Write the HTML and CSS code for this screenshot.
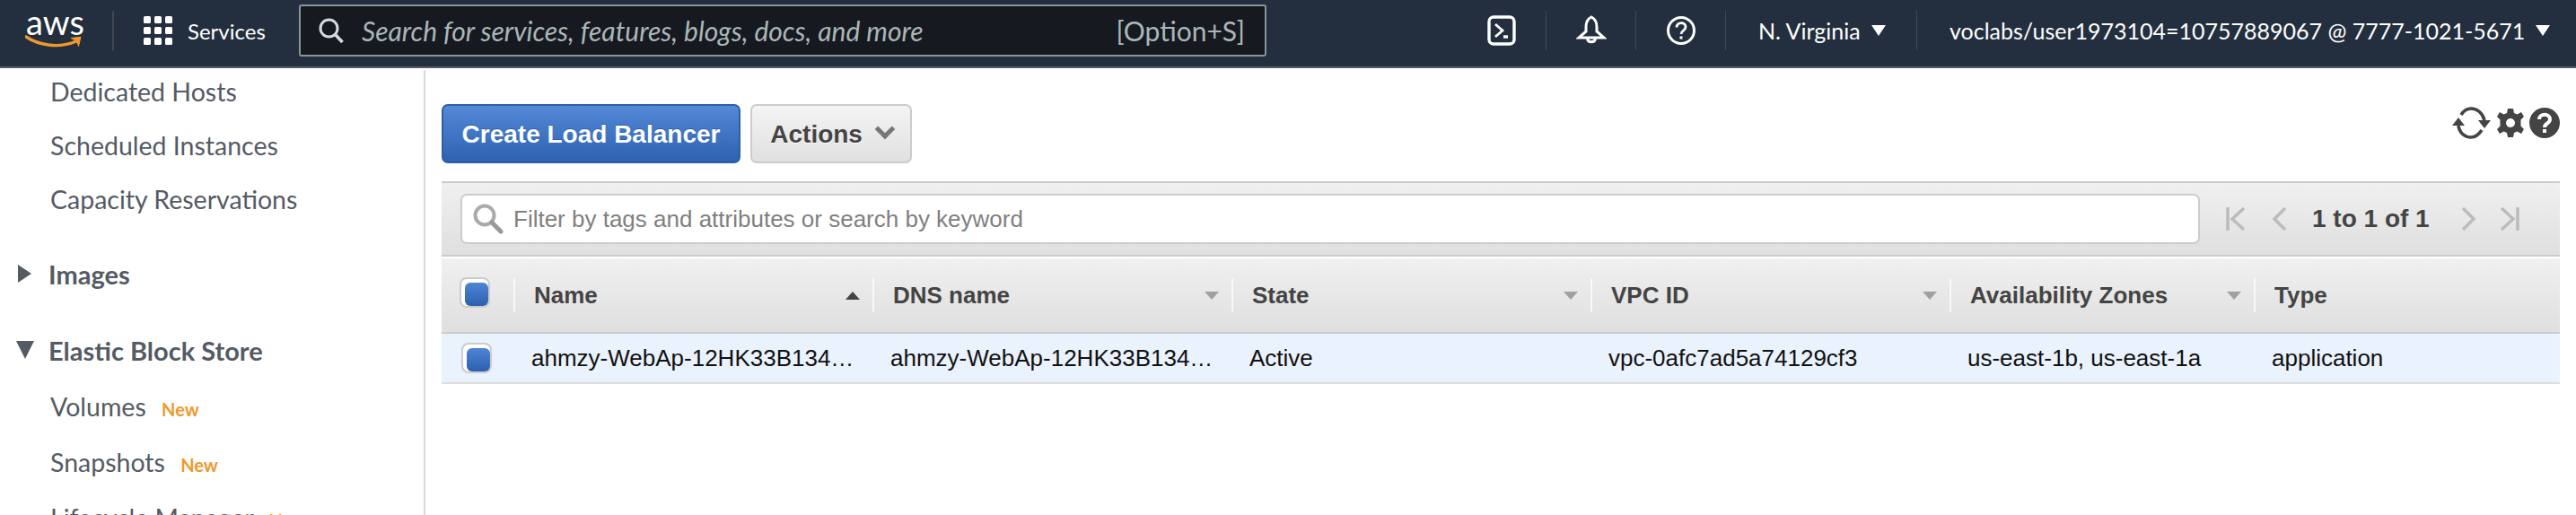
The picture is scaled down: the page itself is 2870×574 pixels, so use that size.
FILE: index.html
```html
<!DOCTYPE html>
<html lang="en">
<head>
    <meta charset="utf-8">
    <title>Load Balancers</title>
    <link rel="stylesheet" href="styles.css">
</head>
<body>
    <header class="nav">
        <div class="logo">
            <span class="logo-text">aws</span>
            <svg class="logo-smile" width="64" height="16" viewBox="0 0 64 16">
                <path d="M1 2C16 12 38 15 57 7" fill="none" stroke="#f0982a" stroke-width="3.4" stroke-linecap="round"/>
                <path d="M51 3.5L62 2.2 59.5 12.5C59 9 56 5.5 51 3.5Z" fill="#f0982a" stroke="#f0982a" stroke-width="1"/>
            </svg>
        </div>
        <span class="nav-sep logo-sep"></span>
        <svg class="grid-icon" width="32" height="32" viewBox="0 0 32 32" fill="#fff">
            <rect x="0" y="0" width="8" height="8" rx="1.5"/><rect x="12" y="0" width="8" height="8" rx="1.5"/><rect x="24" y="0" width="8" height="8" rx="1.5"/>
            <rect x="0" y="12" width="8" height="8" rx="1.5"/><rect x="12" y="12" width="8" height="8" rx="1.5"/><rect x="24" y="12" width="8" height="8" rx="1.5"/>
            <rect x="0" y="24" width="8" height="8" rx="1.5"/><rect x="12" y="24" width="8" height="8" rx="1.5"/><rect x="24" y="24" width="8" height="8" rx="1.5"/>
        </svg>
        <span class="services">Services</span>
        <div class="nav-search">
            <svg width="28" height="28" viewBox="0 0 28 28" fill="none" stroke="#d5dbdb">
                <circle cx="11.5" cy="11.5" r="9.5" stroke-width="3"/>
                <path d="M18.5 18.5L26.5 27" stroke-width="3.6"/>
            </svg>
            <span class="nav-search-text">Search for services, features, blogs, docs, and more</span>
            <span class="nav-search-key">[Option+S]</span>
        </div>
        <div class="nav-right">
            <div class="nav-cell">
                <svg width="32" height="34" viewBox="0 0 32 34" fill="none" stroke="#fff" stroke-width="3.4">
                    <rect x="2" y="2" width="28" height="30" rx="5"/>
                    <path d="M9 10L17 17 9 24" stroke-width="2.8"/>
                    <path d="M18 24H23" stroke-width="3.4"/>
                </svg>
            </div>
            <div class="nav-cell">
                <svg width="34" height="34" viewBox="0 0 34 34" fill="none" stroke="#fff" stroke-width="3">
                    <path d="M17 2C13 4 11 8 11 13V18L3 25H31L23 18V13C23 8 21 4 17 2Z"/>
                    <path d="M12.5 26C13 31 21 31 21.5 26"/>
                </svg>
            </div>
            <div class="nav-cell">
                <svg width="32" height="34" viewBox="0 0 32 34" fill="none" stroke="#fff" stroke-width="3">
                    <circle cx="16" cy="17" r="14.5"/>
                    <path d="M11 13.5C11 7 21 7 21 13C21 17 16 17 16 21" stroke-width="2.8"/>
                    <rect x="14.5" y="23.5" width="3" height="3" fill="#fff" stroke="none"/>
                </svg>
            </div>
            <div class="nav-menu region">N. Virginia <i class="nav-caret"></i></div>
            <div class="nav-menu account">voclabs/user1973104=10757889067 @ 7777-1021-5671 <i class="nav-caret"></i></div>
        </div>
    </header>

    <div class="layout">
        <aside class="sidebar">
            <a class="side-link first">Dedicated Hosts</a>
            <a class="side-link">Scheduled Instances</a>
            <a class="side-link">Capacity Reservations</a>
            <h3 class="side-group images"><i class="arrow-right"></i>Images</h3>
            <h3 class="side-group"><i class="arrow-down"></i>Elastic Block Store</h3>
            <a class="side-link sub">Volumes <span class="new">New</span></a>
            <a class="side-link sub">Snapshots <span class="new">New</span></a>
            <a class="side-link sub">Lifecycle Manager <span class="new">New</span></a>
        </aside>

        <main class="main">
            <div class="actions">
                <button type="button" class="btn btn-primary">Create Load Balancer</button>
                <button type="button" class="btn btn-default">Actions <i class="btn-caret"></i></button>
                <div class="tools">
                    <svg width="44" height="38" viewBox="0 0 44 38" fill="none" stroke="#444">
                        <path d="M10 10C13 5 17 3 21 3C28 3 34 8 36 16" stroke-width="3.6"/>
                        <path d="M33 27C29 33 25 35 21 35C14 35 8 30 7 22" stroke-width="3.6"/>
                        <path d="M0 22H14L7 13Z" fill="#444" stroke="none"/>
                        <path d="M29 16H43L36 25Z" fill="#444" stroke="none"/>
                    </svg>
                    <svg width="32" height="34" viewBox="0 0 32 34" fill="#444">
                        <path fill-rule="evenodd" d="M13 1H19L20 6 23.5 7.5 28 5 31 10 27.5 13.5V20.5L31 24 28 29 23.5 26.5 20 28 19 33H13L12 28 8.5 26.5 4 29 1 24 4.5 20.5V13.5L1 10 4 5 8.5 7.5 12 6ZM16 12A5 5 0 1 0 16 22 5 5 0 1 0 16 12Z"/>
                    </svg>
                    <svg width="34" height="34" viewBox="0 0 34 34">
                        <circle cx="17" cy="17" r="17" fill="#444"/>
                        <path d="M11 13C11 6 23 6 23 13C23 18 17 17 17 22" fill="none" stroke="#fff" stroke-width="4"/>
                        <rect x="15" y="24" width="4" height="4" fill="#fff"/>
                    </svg>
                </div>
            </div>

            <div class="panel">
                <div class="toolbar">
                    <div class="filter">
                        <svg width="36" height="34" viewBox="0 0 36 34" fill="none">
                            <circle cx="14" cy="13" r="10.5" stroke="#aaa" stroke-width="4"/>
                            <path d="M22 21L32 31" stroke="#999" stroke-width="5" stroke-linecap="round"/>
                        </svg>
                        <span>Filter by tags and attributes or search by keyword</span>
                    </div>
                    <div class="pager">
                        <svg width="22" height="28" viewBox="0 0 22 28" fill="none" stroke="#bbb" stroke-width="3.4"><path d="M2 1V27M20 2L7 14 20 26"/></svg>
                        <svg class="pager-prev" width="16" height="28" viewBox="0 0 16 28" fill="none" stroke="#bbb" stroke-width="3.4"><path d="M14 2L2 14 14 26"/></svg>
                        <span class="pager-text">1 to 1 of 1</span>
                        <svg class="pager-next" width="16" height="28" viewBox="0 0 16 28" fill="none" stroke="#bbb" stroke-width="3.4"><path d="M2 2L14 14 2 26"/></svg>
                        <svg class="pager-last" width="22" height="28" viewBox="0 0 22 28" fill="none" stroke="#bbb" stroke-width="3.4"><path d="M20 1V27M2 2L15 14 2 26"/></svg>
                    </div>
                </div>

                <div class="grid-row head">
                    <div class="cell-check"><span class="check"></span></div>
                    <div class="th">Name <i class="sort sort-up"></i></div>
                    <div class="th">DNS name <i class="sort"></i></div>
                    <div class="th">State <i class="sort"></i></div>
                    <div class="th">VPC ID <i class="sort"></i></div>
                    <div class="th">Availability Zones <i class="sort"></i></div>
                    <div class="th">Type</div>
                </div>
                <div class="grid-row body">
                    <div class="cell-check"><span class="check"></span></div>
                    <div class="td">ahmzy-WebAp-12HK33B134…</div>
                    <div class="td">ahmzy-WebAp-12HK33B134…</div>
                    <div class="td">Active</div>
                    <div class="td">vpc-0afc7ad5a74129cf3</div>
                    <div class="td">us-east-1b, us-east-1a</div>
                    <div class="td">application</div>
                </div>
            </div>
        </main>
    </div>
</body>
</html>
```

FILE: styles.css
```css
html, body {
    margin: 0;
    height: 574px;
    overflow: hidden;
    background: #fff;
}

body {
    font-family: "Liberation Sans", Arial, sans-serif;
}

/* top bar */
.nav {
    display: flex;
    align-items: center;
    height: 68px;
    padding: 0 0 6px 28px;
    background: #232f3e;
    border-bottom: 2px solid #545b64;
    color: #fff;
    font-family: Lato, sans-serif;
}

.logo {
    display: flex;
    flex-direction: column;
    width: 62px;
    margin-top: -2px;
}

.logo-text {
    font-size: 38px;
    line-height: 26px;
    margin-left: 1px;
}

.logo-smile {
    margin-top: 2px;
}

.nav-sep {
    width: 2px;
    height: 44px;
    background: #414750;
}

.logo-sep {
    margin-left: 35px;
}

.grid-icon {
    margin-left: 33px;
}

.services {
    margin-left: 17px;
    width: 124px;
    font-size: 24px;
}

.nav-search {
    display: flex;
    align-items: center;
    width: 1078px;
    height: 58px;
    box-sizing: border-box;
    padding: 0 22px 0 20px;
    background: #16191f;
    border: 2px solid #879596;
    border-radius: 3px;
    color: #aab7b8;
    font-size: 30px;
}

.nav-search-text {
    margin-left: 20px;
    font-style: italic;
}

.nav-search-key {
    margin-left: auto;
}

.nav-right {
    display: flex;
    align-items: center;
    margin-left: 212px;
}

.nav-cell {
    display: flex;
    justify-content: center;
    align-items: center;
    width: 100px;
    height: 44px;
    border-right: 1px solid #414750;
    box-sizing: border-box;
}

.nav-menu {
    display: flex;
    align-items: center;
    height: 44px;
    box-sizing: border-box;
    font-size: 25px;
    white-space: nowrap;
}

.region {
    width: 213px;
    padding-left: 36px;
    border-right: 1px solid #414750;
}

.account {
    padding-left: 36px;
}

.nav-caret {
    width: 0;
    height: 0;
    margin-left: 12px;
    border-left: 8px solid transparent;
    border-right: 8px solid transparent;
    border-top: 12px solid #fff;
}

/* page */
.layout {
    display: flex;
}

.sidebar {
    box-sizing: border-box;
    flex: none;
    width: 474px;
    height: 498px;
    margin-top: 2px;
    overflow: hidden;
    border-right: 2px solid #d5dbdb;
    color: #545b64;
    font-family: Lato, sans-serif;
    font-size: 28.5px;
}

.side-link {
    display: block;
    height: 60px;
    padding-left: 56px;
    line-height: 60px;
}

.side-link.first {
    margin-top: -6px;
}

.side-link.sub {
    height: 62px;
    line-height: 62px;
}

.side-group {
    display: flex;
    align-items: center;
    height: 60px;
    margin: 25px 0 2px;
    font-size: 29px;
    font-weight: 700;
    padding-left: 54px;
    position: relative;
}

.side-group.images {
    margin: 23px 0 0;
}

.arrow-right {
    position: absolute;
    left: 20px;
    border-top: 10px solid transparent;
    border-bottom: 10px solid transparent;
    border-left: 15px solid #545b64;
}

.arrow-down {
    position: absolute;
    left: 18px;
    border-left: 10px solid transparent;
    border-right: 10px solid transparent;
    border-top: 20px solid #545b64;
}

.new {
    margin-left: 10px;
    color: #f0982a;
    font-size: 20px;
    font-weight: 700;
}

.main {
    flex: 1;
    padding: 40px 18px 0;
}

.actions {
    display: flex;
    align-items: flex-start;
    height: 66px;
}

.btn {
    height: 66px;
    box-sizing: border-box;
    border-radius: 7px;
    font-family: "Liberation Sans", Arial, sans-serif;
    font-size: 28px;
    font-weight: 700;
}

.btn-primary {
    width: 333px;
    padding: 2px 0 0;
    color: #fff;
    border: 2px solid #2d5fa8;
    background: linear-gradient(#5389d6, #2c62b0);
    text-shadow: 0 -1px 0 #2d5fa8;
}

.btn-default {
    width: 180px;
    margin-left: 11px;
    padding: 2px 0 0;
    color: #444;
    border: 2px solid #ccc;
    background: linear-gradient(#f4f4f4, #e0e0e0);
    text-shadow: 0 1px 0 #fff;
}

.btn-caret {
    display: inline-block;
    width: 11px;
    height: 11px;
    margin: 0 0 7px 9px;
    border-right: 5px solid #777;
    border-bottom: 5px solid #777;
    transform: rotate(45deg);
}

.tools {
    display: flex;
    align-items: center;
    gap: 5px;
    margin-left: auto;
    margin-top: 2px;
}

.panel {
    margin-top: 20px;
}

.toolbar {
    display: flex;
    align-items: center;
    height: 80px;
    padding-left: 21px;
    background: linear-gradient(#f0f0f0, #dfdfdf);
    border-top: 2px solid #ccc;
    border-bottom: 2px solid #ccc;
}

.filter {
    display: flex;
    align-items: center;
    gap: 10px;
    width: 1938px;
    height: 56px;
    box-sizing: border-box;
    padding-left: 11px;
    background: #fff;
    border: 2px solid #ccc;
    border-radius: 7px;
    color: #808080;
    font-size: 26px;
}

.pager {
    display: flex;
    align-items: center;
    margin-left: 29px;
}

.pager-prev {
    margin-left: 30px;
}

.pager-text {
    margin: 0 35px 0 28px;
    color: #444;
    font-size: 28px;
    font-weight: 700;
}

.pager-last {
    margin-left: 27px;
}

.grid-row {
    display: grid;
    grid-template-columns: 80px 400px 400px 400px 400px 339px 1fr;
    align-items: center;
}

.head {
    height: 82px;
    border-top: 2px solid #fff;
    border-bottom: 2px solid #ccc;
    background: linear-gradient(#f0f0f0, #dfdfdf);
    color: #444;
    font-size: 26px;
    font-weight: 700;
}

.body {
    height: 54px;
    background: #eaf2fd;
    border-bottom: 2px solid #ddd;
    color: #111;
    font-size: 26px;
}

.cell-check {
    padding-left: 20px;
}

.head .cell-check {
    margin-top: -6px;
}

.check {
    display: block;
    position: relative;
    box-sizing: border-box;
    width: 34px;
    height: 34px;
    background: #fff;
    border: 2px solid #ccc;
    border-radius: 8px;
}

.check::after {
    content: "";
    position: absolute;
    left: 4px;
    top: 4px;
    width: 26px;
    height: 26px;
    border-radius: 6px;
    background: linear-gradient(#4f85d6, #2c60ae);
}

.body .cell-check {
    padding-left: 22px;
}

.th {
    display: flex;
    align-items: center;
    justify-content: space-between;
    height: 38px;
    box-sizing: border-box;
    padding: 0 14px 0 21px;
    border-left: 2px solid #f8f8f8;
}

.td {
    padding-left: 20px;
    white-space: nowrap;
}

.sort {
    width: 0;
    height: 0;
    border-left: 8px solid transparent;
    border-right: 8px solid transparent;
    border-top: 9px solid #a0a0a0;
}

.sort-up {
    border-top: 0;
    border-bottom: 9px solid #444;
}
```
